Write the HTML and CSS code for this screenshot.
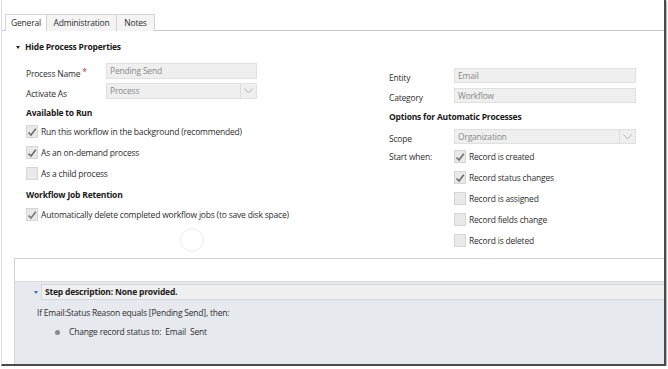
FILE: index.html
```html
<!DOCTYPE html>
<html lang="en">
  <head>
    <meta charset="UTF-8" />
    <title>Process: Pending Send</title>
    <link rel="stylesheet" href="styles.css">
  </head>
  <body>
    <div class="window">
      <div class="tabs">
        <div class="tab tab-general active">General</div>
        <div class="tab tab-admin">Administration</div>
        <div class="tab tab-notes">Notes</div>
      </div>

      <div class="props">
        <h2 class="toggle"><span class="caret"></span>Hide Process Properties</h2>

        <div class="columns">
          <div class="col col-left">
            <div class="field">
              <label>Process Name<span class="req">*</span></label>
              <div class="input">Pending Send</div>
            </div>
            <div class="field">
              <label>Activate As</label>
              <div class="input select">
                <span>Process</span>
                <span class="chev"><svg width="9" height="6" viewBox="0 0 9 6"><polyline points="0.5,0.5 4.5,5 8.5,0.5" fill="none" stroke="#b5b5b5" stroke-width="1"/></svg></span>
              </div>
            </div>

            <h3>Available to Run</h3>
            <div class="check">
              <span class="box"><svg width="10" height="10" viewBox="0 0 10 10"><polyline points="1.5,5.5 4,8 8.8,1.8" fill="none" stroke="#6e6e6e" stroke-width="1.6"/></svg></span>
              Run this workflow in the background (recommended)
            </div>
            <div class="check">
              <span class="box"><svg width="10" height="10" viewBox="0 0 10 10"><polyline points="1.5,5.5 4,8 8.8,1.8" fill="none" stroke="#6e6e6e" stroke-width="1.6"/></svg></span>
              As an on-demand process
            </div>
            <div class="check">
              <span class="box"></span>
              As a child process
            </div>

            <h3 class="retention">Workflow Job Retention</h3>
            <div class="check">
              <span class="box"><svg width="10" height="10" viewBox="0 0 10 10"><polyline points="1.5,5.5 4,8 8.8,1.8" fill="none" stroke="#7a7a7a" stroke-width="1.6"/></svg></span>
              Automatically delete completed workflow jobs (to save disk space)
            </div>

            <!-- faint busy ring left over from the page -->
            <div class="ring"></div>
          </div>

          <div class="col col-right">
            <div class="field">
              <label>Entity</label>
              <div class="input">Email</div>
            </div>
            <div class="field">
              <label>Category</label>
              <div class="input">Workflow</div>
            </div>

            <h3>Options for Automatic Processes</h3>
            <div class="field scope">
              <label>Scope</label>
              <div class="input select">
                <span>Organization</span>
                <span class="chev"><svg width="9" height="6" viewBox="0 0 9 6"><polyline points="0.5,0.5 4.5,5 8.5,0.5" fill="none" stroke="#b5b5b5" stroke-width="1"/></svg></span>
              </div>
            </div>

            <div class="start-when">
              <label>Start when:</label>
              <div class="triggers">
                <div class="check">
                  <span class="box"><svg width="10" height="10" viewBox="0 0 10 10"><polyline points="1.5,5.5 4,8 8.8,1.8" fill="none" stroke="#6e6e6e" stroke-width="1.6"/></svg></span>
                  Record is created
                </div>
                <div class="check">
                  <span class="box"><svg width="10" height="10" viewBox="0 0 10 10"><polyline points="1.5,5.5 4,8 8.8,1.8" fill="none" stroke="#6e6e6e" stroke-width="1.6"/></svg></span>
                  Record status changes
                </div>
                <div class="check"><span class="box"></span>Record is assigned</div>
                <div class="check"><span class="box"></span>Record fields change</div>
                <div class="check"><span class="box"></span>Record is deleted</div>
              </div>
            </div>
          </div>
        </div>
      </div>

      <div class="steps">
        <div class="steps-top"></div>
        <div class="steps-body">
          <div class="step-row">
            <span class="blue-caret"></span>
            <div class="step-bar">Step description: None provided.</div>
          </div>
          <div class="cond">If Email:Status Reason equals [Pending Send], then:</div>
          <div class="action"><span class="dot"></span>Change record status to:&nbsp; Email&nbsp; Sent</div>
        </div>
      </div>
    </div>
  </body>
</html>
```

FILE: styles.css
```css
* {
  box-sizing: border-box;
  margin: 0;
  padding: 0;
}

body {
  background: #ffffff;
  font-family: "Open Sans", "Noto Sans", sans-serif;
  font-size: 8.5px;
  letter-spacing: -0.2px;
  color: #2e2e2e;
}

.window {
  margin-left: 1px;
  width: 665px;
  height: 366px;
  border-left: 1px solid #dcdcdc;
  border-right: 2px solid #4a4a4a;
  border-bottom: 2px solid #4a4a4a;
  box-shadow: 1px 1px 1px rgba(0, 0, 0, 0.25);
  display: flex;
  flex-direction: column;
  background: #ffffff;
}

/* tabs */
.tabs {
  display: flex;
  height: 31px;
  padding: 14px 0 0 3px;
  border-bottom: 1px solid #c9cad0;
}
.tab {
  height: 17px;
  line-height: 15px;
  border: 1px solid #d4d4d4;
  border-bottom: none;
  background: #f4f4f4;
  text-align: center;
  color: #2e2e2e;
  margin-right: -1px;
}
.tab.active {
  background: #ffffff;
  position: relative;
}
.tab-general { width: 42px; }
.tab-admin { width: 71px; }
.tab-notes { width: 39px; }

/* process properties */
.props {
  padding-left: 14px;
}
.toggle {
  margin-top: 10px;
  height: 12px;
  line-height: 12px;
  font-size: 8.5px;
  font-weight: 700;
  color: #1a1a1a;
  display: flex;
  align-items: center;
}
.caret {
  width: 0;
  height: 0;
  border-left: 2.5px solid transparent;
  border-right: 2.5px solid transparent;
  border-top: 3px solid #222222;
  margin-right: 5px;
}

.columns {
  display: flex;
  margin: 10px 0 0 10px;
}
.col-left {
  width: 363px;
  position: relative;
}
.col-right {
  width: 250px;
  padding-top: 5px;
}

.field {
  display: flex;
  align-items: flex-end;
  height: 16px;
  margin-bottom: 4px;
}
.field label {
  width: 80px;
  line-height: 12px;
  margin-bottom: -1px;
}
.req {
  color: #d32a2a;
  margin-left: 2px;
  position: relative;
  top: -2px;
}
.input {
  width: 151px;
  height: 16px;
  line-height: 14px;
  padding-left: 3px;
  background: #efefef;
  border: 1px solid #e0e0e0;
  color: #8a8a8a;
}
.select {
  display: flex;
  justify-content: space-between;
}
.chev {
  width: 16px;
  height: 14px;
  border-left: 1px solid #dedede;
  display: flex;
  align-items: center;
  justify-content: center;
}

.col-right .field {
  height: 15px;
  margin-bottom: 5px;
}
.col-right .field label {
  width: 65px;
}
.col-right .input {
  width: 182px;
  height: 15px;
  line-height: 13px;
}
.col-right .chev {
  height: 13px;
}

h3 {
  margin-top: 8px;
  height: 12px;
  line-height: 12px;
  font-size: 8.5px;
  font-weight: 700;
  color: #1a1a1a;
  margin-bottom: 2px;
}
h3.retention {
  margin-top: 5px;
  margin-bottom: 3px;
}
.col-right h3 {
  margin-bottom: 6px;
}
.col-right .scope {
  margin-bottom: 2px;
}

.check {
  display: flex;
  align-items: center;
  height: 21px;
}
.box {
  width: 12px;
  height: 13px;
  margin-right: 3px;
  background: #e9e9e9;
  border: 1px solid #d6d6d6;
  display: flex;
  align-items: center;
  justify-content: center;
}

.start-when {
  display: flex;
}
.start-when label {
  width: 65px;
  line-height: 12px;
  padding-top: 5px;
}

.ring {
  position: absolute;
  left: 154px;
  top: 165px;
  width: 24px;
  height: 24px;
  border-radius: 50%;
  border: 1px solid #ececec;
}

/* steps */
.steps {
  margin: 7px 0 0 12px;
  flex-grow: 1;
  display: flex;
  flex-direction: column;
  border-top: 1px solid #d2d4d8;
  border-left: 1px solid #d2d4d8;
}
.steps-top {
  height: 22px;
  background: #ffffff;
}
.steps-body {
  flex-grow: 1;
  background: #e6e9ee;
  border-top: 1px solid #d7dbe1;
  padding: 2px 0 0 19px;
}
.step-row {
  display: flex;
  align-items: center;
}
.blue-caret {
  width: 0;
  height: 0;
  border-left: 2.5px solid transparent;
  border-right: 2.5px solid transparent;
  border-top: 3px solid #2a74c8;
  margin-right: 3px;
}
.step-bar {
  flex-grow: 1;
  height: 16px;
  line-height: 14px;
  padding-left: 3px;
  background: #f0f0f0;
  border: 1px solid #d3d7dd;
  border-right: none;
  font-weight: 700;
  color: #1a1a1a;
}
.cond {
  margin-top: 7px;
  margin-left: 3px;
  line-height: 12px;
}
.action {
  margin: 7px 0 0 21px;
  line-height: 12px;
  display: flex;
  align-items: center;
}
.dot {
  width: 5px;
  height: 5px;
  border-radius: 50%;
  background: #8a8a8a;
  margin-right: 9px;
}
```
